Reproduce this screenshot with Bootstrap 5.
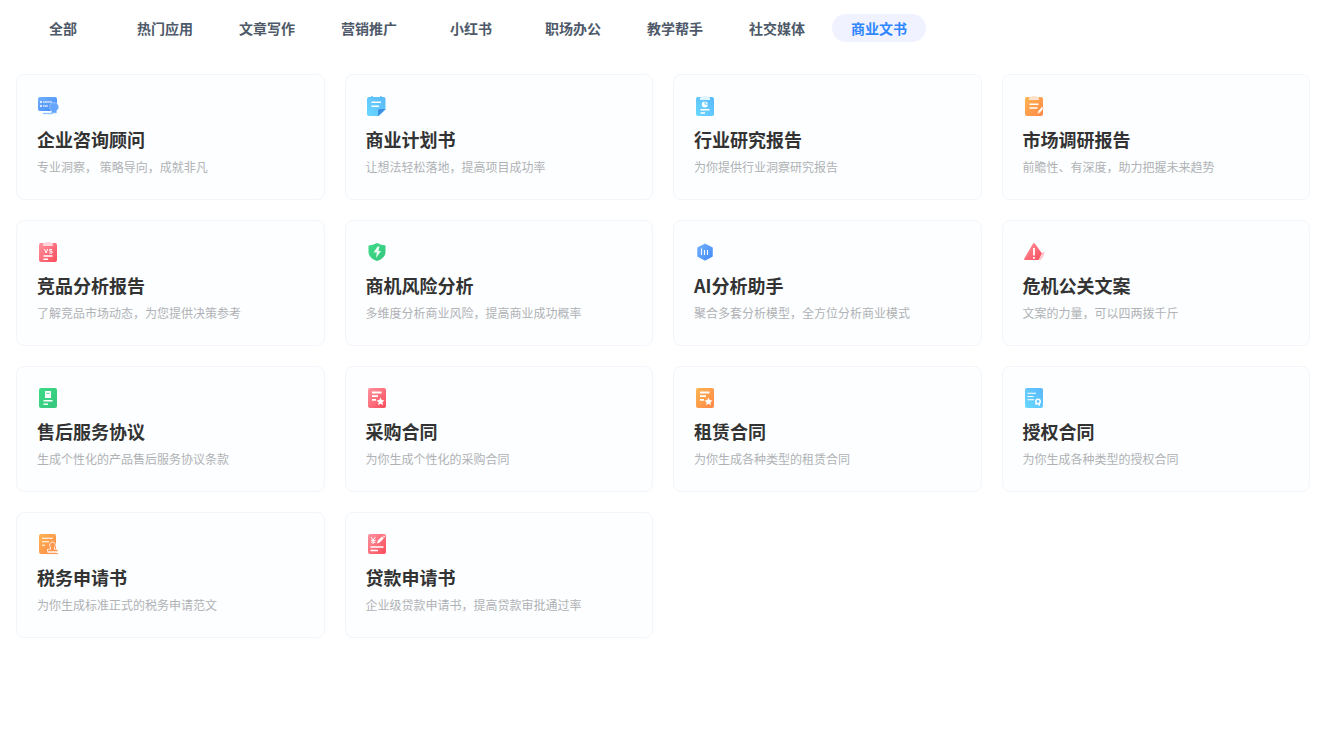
<!DOCTYPE html>
<html lang="zh-CN">
<head>
<meta charset="utf-8">
<meta name="viewport" content="width=device-width, initial-scale=1">
<title>商业文书</title>
<link href="https://cdn.jsdelivr.net/npm/bootstrap@5.3.0/dist/css/bootstrap.min.css" rel="stylesheet">
<style>
  body { font-family: "Noto Sans CJK SC", sans-serif; background: #fff; }
  .page { padding: 14px 20px 32px 16px; }
  .category-tabs { gap: 8px; margin-bottom: 32px; }
  .category-tabs .nav-link {
    width: 94px; padding: 0; border-radius: 14px; text-align: center;
    font-size: 14px; line-height: 28px; font-weight: 700; color: #4e5969;
  }
  .category-tabs .nav-link.active { color: #2f86ff; background: #f0f3ff; }
  .tool-grid { --bs-gutter-x: 20px; --bs-gutter-y: 20px; }
  .tool-card {
    --bs-card-bg: #fcfeff; --bs-card-border-color: #f2f5fa; --bs-card-border-radius: 8px;
    padding: 20px; text-decoration: none;
  }
  .tool-card:hover { box-shadow: 0 4px 12px #2f86ff1a; }
  .tool-card svg { width: 22px; height: 22px; margin-bottom: 8px; }
  .tool-title { margin: 0 0 2px; font-size: 18px; line-height: 28px; font-weight: 700; color: #333; }
  .tool-desc { margin: 0; font-size: 12px; line-height: 24px; color: #b0b2b5; }
  .ln { fill: none; stroke: #fff; stroke-width: 1.5; }
  .ln-thin { stroke-width: 1.1; }
  .ln-thick { stroke-width: 1.8; }
</style>
</head>
<body>
<svg width="0" height="0" class="position-absolute" aria-hidden="true">
  <defs>
    <linearGradient id="blue" x1="0" y1="0" x2="1" y2="1"><stop stop-color="#72b0fc"/><stop offset="1" stop-color="#438af8"/></linearGradient>
    <linearGradient id="sky" x1="0" y1="1" x2="1" y2="0"><stop stop-color="#68d8ff"/><stop offset="1" stop-color="#5cb8fb"/></linearGradient>
    <linearGradient id="orange" x1="0" y1="0" x2="1" y2="1"><stop stop-color="#ffb552"/><stop offset="1" stop-color="#ff8747"/></linearGradient>
    <linearGradient id="red" x1="0" y1="0" x2="1" y2="1"><stop stop-color="#ff93a0"/><stop offset="1" stop-color="#fb4c5a"/></linearGradient>
    <linearGradient id="green" x1="0" y1="0" x2="1" y2="1"><stop stop-color="#3ddb88"/><stop offset="1" stop-color="#35c67d"/></linearGradient>
  </defs>
</svg>
<main class="page container-fluid">
  <nav class="nav nav-pills category-tabs" aria-label="分类">
    <a class="nav-link" href="#">全部</a>
    <a class="nav-link" href="#">热门应用</a>
    <a class="nav-link" href="#">文章写作</a>
    <a class="nav-link" href="#">营销推广</a>
    <a class="nav-link" href="#">小红书</a>
    <a class="nav-link" href="#">职场办公</a>
    <a class="nav-link" href="#">教学帮手</a>
    <a class="nav-link" href="#">社交媒体</a>
    <a class="nav-link active" href="#" aria-current="page">商业文书</a>
  </nav>

  <div class="row row-cols-1 row-cols-sm-2 row-cols-lg-4 tool-grid mt-0">
    <div class="col mt-0"><a class="card tool-card h-100" href="#">
      <svg viewBox="0 0 22 22" aria-hidden="true"><rect x="1" y="2" width="19" height="14" rx="2" fill="url(#blue)"/><path d="M3 7h2M3 11h2" class="ln"/><path d="M6 7h9M6 11h5" class="ln ln-thin"/><path d="M6 18.500h10" stroke="#8fc0ff" stroke-width="1.300"/><path d="M17 7.500a4.500 4.500 0 0 1 2.500 8.200V18h-5v-2.300A4.500 4.500 0 0 1 17 7.500z" fill="#65a5fc" stroke="#a9cfff" stroke-width=".7"/></svg>
      <h2 class="tool-title">企业咨询顾问</h2><p class="tool-desc">专业洞察， 策略导向，成就非凡</p>
    </a></div>
    <div class="col mt-0"><a class="card tool-card h-100" href="#">
      <svg viewBox="0 0 22 22" aria-hidden="true"><path d="M3 2h14.500a2 2 0 0 1 2 2v10.500L13 21H3a2 2 0 0 1-2-2V4a2 2 0 0 1 2-2z" fill="url(#sky)"/><path d="M12 21v-5a2 2 0 0 1 2-2h5.500z" fill="#3b8ee0"/><path d="M6 1V3.500M15 1V3.500" stroke="#5fbdf8" stroke-width="1.500"/><path d="M5.500 7.300H15M5.500 11.300h7.500" class="ln"/></svg>
      <h2 class="tool-title">商业计划书</h2><p class="tool-desc">让想法轻松落地，提高项目成功率</p>
    </a></div>
    <div class="col mt-0"><a class="card tool-card h-100" href="#">
      <svg viewBox="0 0 22 22" aria-hidden="true"><rect x="2" y="2" width="18" height="19" rx="2" fill="url(#sky)"/><path d="M6 3q0-1 2-1l1-1h4l1 1q2 0 2 1v2H6z" fill="#e1f5ff"/><circle cx="10.800" cy="9.500" r="3" fill="#fff"/><path d="M11 6v3.200h3.300" fill="none" stroke="#61c2fc" stroke-width=".9"/><path d="M6.500 14.700h9M6.500 18H11" class="ln"/></svg>
      <h2 class="tool-title">行业研究报告</h2><p class="tool-desc">为你提供行业洞察研究报告</p>
    </a></div>
    <div class="col mt-0"><a class="card tool-card h-100" href="#">
      <svg viewBox="0 0 22 22" aria-hidden="true"><rect x="2" y="2" width="18" height="19" rx="2" fill="url(#orange)"/><path d="M6 3q0-1 2-1l1-1h4l1 1q2 0 2 1v2H6z" fill="#ffe2cc"/><path d="M6.500 9.300h9M6.500 13h8" class="ln"/><path d="M19 11.500l-3.800 4.700-.7 2.800 2.500-1.300 3.500-4.500z" fill="#fff" stroke="#ff9954" stroke-width=".5"/></svg>
      <h2 class="tool-title">市场调研报告</h2><p class="tool-desc">前瞻性、有深度，助力把握未来趋势</p>
    </a></div>

    <div class="col"><a class="card tool-card h-100" href="#">
      <svg viewBox="0 0 22 22" aria-hidden="true"><rect x="2" y="2" width="18" height="19" rx="2" fill="url(#red)"/><path d="M6 3q0-1 2-1l1-1h4l1 1q2 0 2 1v2H6z" fill="#ffd3d9"/><path d="M7.500 8l1.600 4 1.600-4M15 8.500h-2.300v1.700H15V12h-2.700" fill="none" stroke="#fff"/><path d="M6.500 15h9M6.500 18.200h4.500" class="ln"/></svg>
      <h2 class="tool-title">竞品分析报告</h2><p class="tool-desc">了解竞品市场动态，为您提供决策参考</p>
    </a></div>
    <div class="col"><a class="card tool-card h-100" href="#">
      <svg viewBox="0 0 22 22" aria-hidden="true"><path d="M11 2q4 2.300 8.500 2.500V11q0 6-8.500 9-8.500-3-8.500-9V4.500Q7 4.300 11 2z" fill="url(#green)"/><path d="M11.500 5.500h2L12.500 10H15l-5 7 .8-5.500H7.500z" fill="#e9fbf2"/></svg>
      <h2 class="tool-title">商机风险分析</h2><p class="tool-desc">多维度分析商业风险，提高商业成功概率</p>
    </a></div>
    <div class="col"><a class="card tool-card h-100" href="#">
      <svg viewBox="0 0 22 22" aria-hidden="true"><path d="M11 3.500l7 3.500v8L11 18.800 4 15V7z" fill="url(#blue)" stroke="url(#blue)" stroke-width="1.500" stroke-linejoin="round"/><path d="M7.500 7.500v6.500M10.500 9V14M13.500 9V14" class="ln ln-thin"/></svg>
      <h2 class="tool-title">AI分析助手</h2><p class="tool-desc">聚合多套分析模型，全方位分析商业模式</p>
    </a></div>
    <div class="col"><a class="card tool-card h-100" href="#">
      <svg viewBox="0 0 22 22" aria-hidden="true"><path d="M18.500 13l3-1.500M16.500 19l4-5.500" stroke="#ffc2ca" stroke-width="1.800"/><path d="M9.800 3q1.200-2 2.400 0L19 12.500 15.500 19H2q-1.500 0-.7-1.500z" fill="url(#red)"/><path d="M11 7v7.500M11 16v1.800" class="ln ln-thick"/></svg>
      <h2 class="tool-title">危机公关文案</h2><p class="tool-desc">文案的力量，可以四两拨千斤</p>
    </a></div>

    <div class="col"><a class="card tool-card h-100" href="#">
      <svg viewBox="0 0 22 22" aria-hidden="true"><rect x="2" y="1" width="18" height="20" rx="2" fill="url(#green)"/><path d="M8 4h6v7H8z" fill="#fff"/><path d="M9.500 6q1.500 2 3 0" fill="none" stroke="#39cf82" stroke-width=".9"/><path d="M6.500 13.700h9M6.500 17.200H11" class="ln"/></svg>
      <h2 class="tool-title">售后服务协议</h2><p class="tool-desc">生成个性化的产品售后服务协议条款</p>
    </a></div>
    <div class="col"><a class="card tool-card h-100" href="#">
      <svg viewBox="0 0 22 22" aria-hidden="true"><rect x="2" y="1" width="18" height="20" rx="2" fill="url(#red)"/><path d="M6 5.500h9.500M6 9.200h6M6 12.800h4" class="ln ln-thick"/><path d="M14.500 10.500l1.200 2.600 2.800.3-2.100 1.900.6 2.800-2.500-1.400-2.500 1.400.6-2.800-2.100-1.900 2.800-.3z" fill="#fff"/></svg>
      <h2 class="tool-title">采购合同</h2><p class="tool-desc">为你生成个性化的采购合同</p>
    </a></div>
    <div class="col"><a class="card tool-card h-100" href="#">
      <svg viewBox="0 0 22 22" aria-hidden="true"><rect x="2" y="1" width="18" height="20" rx="2" fill="url(#orange)"/><path d="M6 5.500h9.500M6 9.200h6M6 12.800h4" class="ln ln-thick"/><path d="M14.500 10.500l1.200 2.600 2.800.3-2.100 1.900.6 2.800-2.500-1.400-2.500 1.400.6-2.800-2.100-1.900 2.800-.3z" fill="#fff"/></svg>
      <h2 class="tool-title">租赁合同</h2><p class="tool-desc">为你生成各种类型的租赁合同</p>
    </a></div>
    <div class="col"><a class="card tool-card h-100" href="#">
      <svg viewBox="0 0 22 22" aria-hidden="true"><rect x="2" y="1" width="18" height="20" rx="2" fill="url(#sky)"/><path d="M4.500 6.300H13M4.500 9.500h6M4.500 12.700H11" class="ln ln-thin"/><circle cx="15" cy="14.500" r="2.200" class="ln"/><path d="M13.200 16v1.700M16.200 16.500v2.300" class="ln"/></svg>
      <h2 class="tool-title">授权合同</h2><p class="tool-desc">为你生成各种类型的授权合同</p>
    </a></div>

    <div class="col"><a class="card tool-card h-100" href="#">
      <svg viewBox="0 0 22 22" aria-hidden="true"><rect x="2" y="1" width="17" height="20" rx="2" fill="url(#orange)"/><path d="M5 5.300h11M5 8.800h7M5 12.300h3" class="ln ln-thin"/><path d="M15.500 9a3 3 0 0 1 2 5.200v2H21v2.500H10.500v-2.500h3v-2A3 3 0 0 1 15.500 9z" fill="#ff9850" stroke="#fff" stroke-width=".8"/><path d="M10.500 20.500H21" stroke="#ff9850" stroke-width="1.200"/><path d="M10.500 19.400H21" stroke="#fff" stroke-width=".8"/></svg>
      <h2 class="tool-title">税务申请书</h2><p class="tool-desc">为你生成标准正式的税务申请范文</p>
    </a></div>
    <div class="col"><a class="card tool-card h-100" href="#">
      <svg viewBox="0 0 22 22" aria-hidden="true"><rect x="2" y="1" width="18" height="20" rx="2" fill="url(#red)"/><path d="M5 4l2.200 3L9.500 4M7.200 7v4M5 7.300h4.500M5 9.200h4.500" fill="none" stroke="#fff"/><path d="M11 10.500l.7-2.700L16 3.500l1.800 1.800-4.200 4.300z" fill="#fff"/><path d="M17.500 2.800l1.200 1.200" stroke="#fff" stroke-width="1.300"/><path d="M4.500 14h13M4.500 17.500h7.500" class="ln"/></svg>
      <h2 class="tool-title">贷款申请书</h2><p class="tool-desc">企业级贷款申请书，提高贷款审批通过率</p>
    </a></div>
  </div>
</main>
<script src="https://cdn.jsdelivr.net/npm/bootstrap@5.3.0/dist/js/bootstrap.bundle.min.js"></script>
</body>
</html>
